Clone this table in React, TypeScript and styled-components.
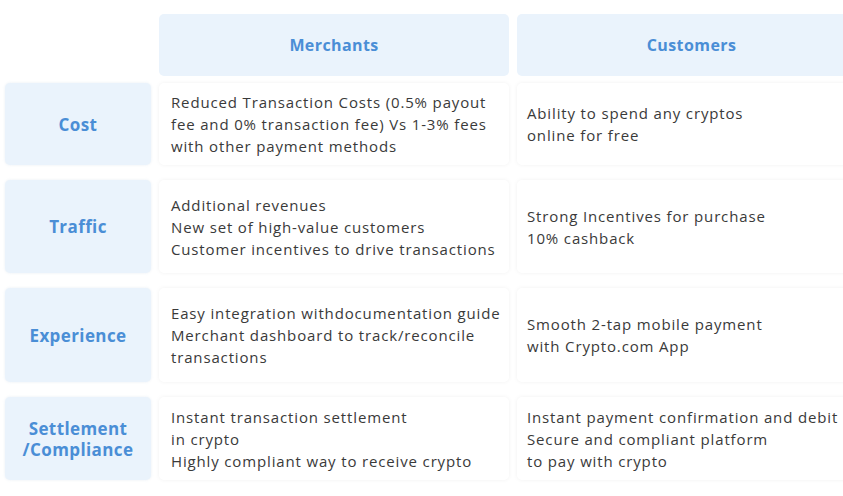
import React from 'react';
import styled, { createGlobalStyle } from 'styled-components';

const GlobalStyle = createGlobalStyle`
  html, body {
    margin: 0;
    padding: 0;
    background: #ffffff;
    overflow: hidden;
  }
  body {
    font-family: 'Open Sans', 'Liberation Sans', sans-serif;
  }
`;

type Row = {
  label: string[];
  merchants: string[];
  customers: string[];
  height: number;
};

const rows: Row[] = [
  {
    label: ['Cost'],
    merchants: [
      'Reduced Transaction Costs (0.5% payout',
      'fee and 0% transaction fee) Vs 1-3% fees',
      'with other payment methods',
    ],
    customers: ['Ability to spend any cryptos', 'online for free'],
    height: 82,
  },
  {
    label: ['Traffic'],
    merchants: [
      'Additional revenues',
      'New set of high-value customers',
      'Customer incentives to drive transactions',
    ],
    customers: ['Strong Incentives for purchase', '10% cashback'],
    height: 93,
  },
  {
    label: ['Experience'],
    merchants: [
      'Easy integration withdocumentation guide',
      'Merchant dashboard to track/reconcile',
      'transactions',
    ],
    customers: ['Smooth 2-tap mobile payment', 'with Crypto.com App'],
    height: 94,
  },
  {
    label: ['Settlement', '/Compliance'],
    merchants: [
      'Instant transaction settlement',
      'in crypto',
      'Highly compliant way to receive crypto',
    ],
    customers: [
      'Instant payment confirmation and debit',
      'Secure and compliant platform',
      'to pay with crypto',
    ],
    height: 83,
  },
];

const App = () => {
  return (
    <>
      <GlobalStyle />
      <Page>
        <Table>
          <Corner />
          <HeaderCell>Merchants</HeaderCell>
          <HeaderCell>Customers</HeaderCell>
          {rows.map((row, i) => (
            <React.Fragment key={i}>
              <LabelCell $height={row.height} $first={i === 0}>
                {row.label.map((l) => (
                  <span key={l}>{l}</span>
                ))}
              </LabelCell>
              <BodyCell $height={row.height} $first={i === 0} $pad={12}>
                {row.merchants.map((t) => (
                  <span key={t}>{t}</span>
                ))}
              </BodyCell>
              <BodyCell $height={row.height} $first={i === 0} $pad={10}>
                {row.customers.map((t) => (
                  <span key={t}>{t}</span>
                ))}
              </BodyCell>
            </React.Fragment>
          ))}
        </Table>
      </Page>
    </>
  );
};

export default App;

const Page = styled.div`
  width: 843px;
  height: 496px;
  padding: 14px 0 0 5px;
  box-sizing: border-box;
  overflow: hidden;
`;

const Table = styled.div`
  display: grid;
  grid-template-columns: 146px 350px 349px;
  column-gap: 8px;
  width: 870px;
`;

const Corner = styled.div``;

const HeaderCell = styled.div`
  height: 62px;
  background: #eaf3fc;
  border-radius: 5px;
  display: flex;
  align-items: center;
  justify-content: center;
  font-weight: 700;
  font-size: 16px;
  letter-spacing: 0.4px;
  color: #4a8ed6;
`;

const LabelCell = styled.div<{ $height: number; $first: boolean }>`
  height: ${(p) => p.$height}px;
  margin-top: ${(p) => (p.$first ? 7 : 15)}px;
  background: #eaf3fc;
  border-radius: 5px;
  display: flex;
  flex-direction: column;
  align-items: center;
  justify-content: center;
  font-weight: 700;
  font-size: 17px;
  line-height: 21px;
  letter-spacing: 0.4px;
  color: #4a8ed6;
  box-shadow: 0 0 3px rgba(200, 215, 230, 0.4);
`;

const BodyCell = styled.div<{ $height: number; $first: boolean; $pad: number }>`
  height: ${(p) => p.$height}px;
  margin-top: ${(p) => (p.$first ? 7 : 15)}px;
  padding-left: ${(p) => p.$pad}px;
  background: #ffffff;
  border-radius: 5px;
  display: flex;
  flex-direction: column;
  justify-content: center;
  font-size: 15px;
  font-weight: 400;
  line-height: 22px;
  letter-spacing: 0.85px;
  color: #3a3a3a;
  box-shadow: 0 0 4px rgba(0, 0, 0, 0.06);
  white-space: nowrap;
`;
